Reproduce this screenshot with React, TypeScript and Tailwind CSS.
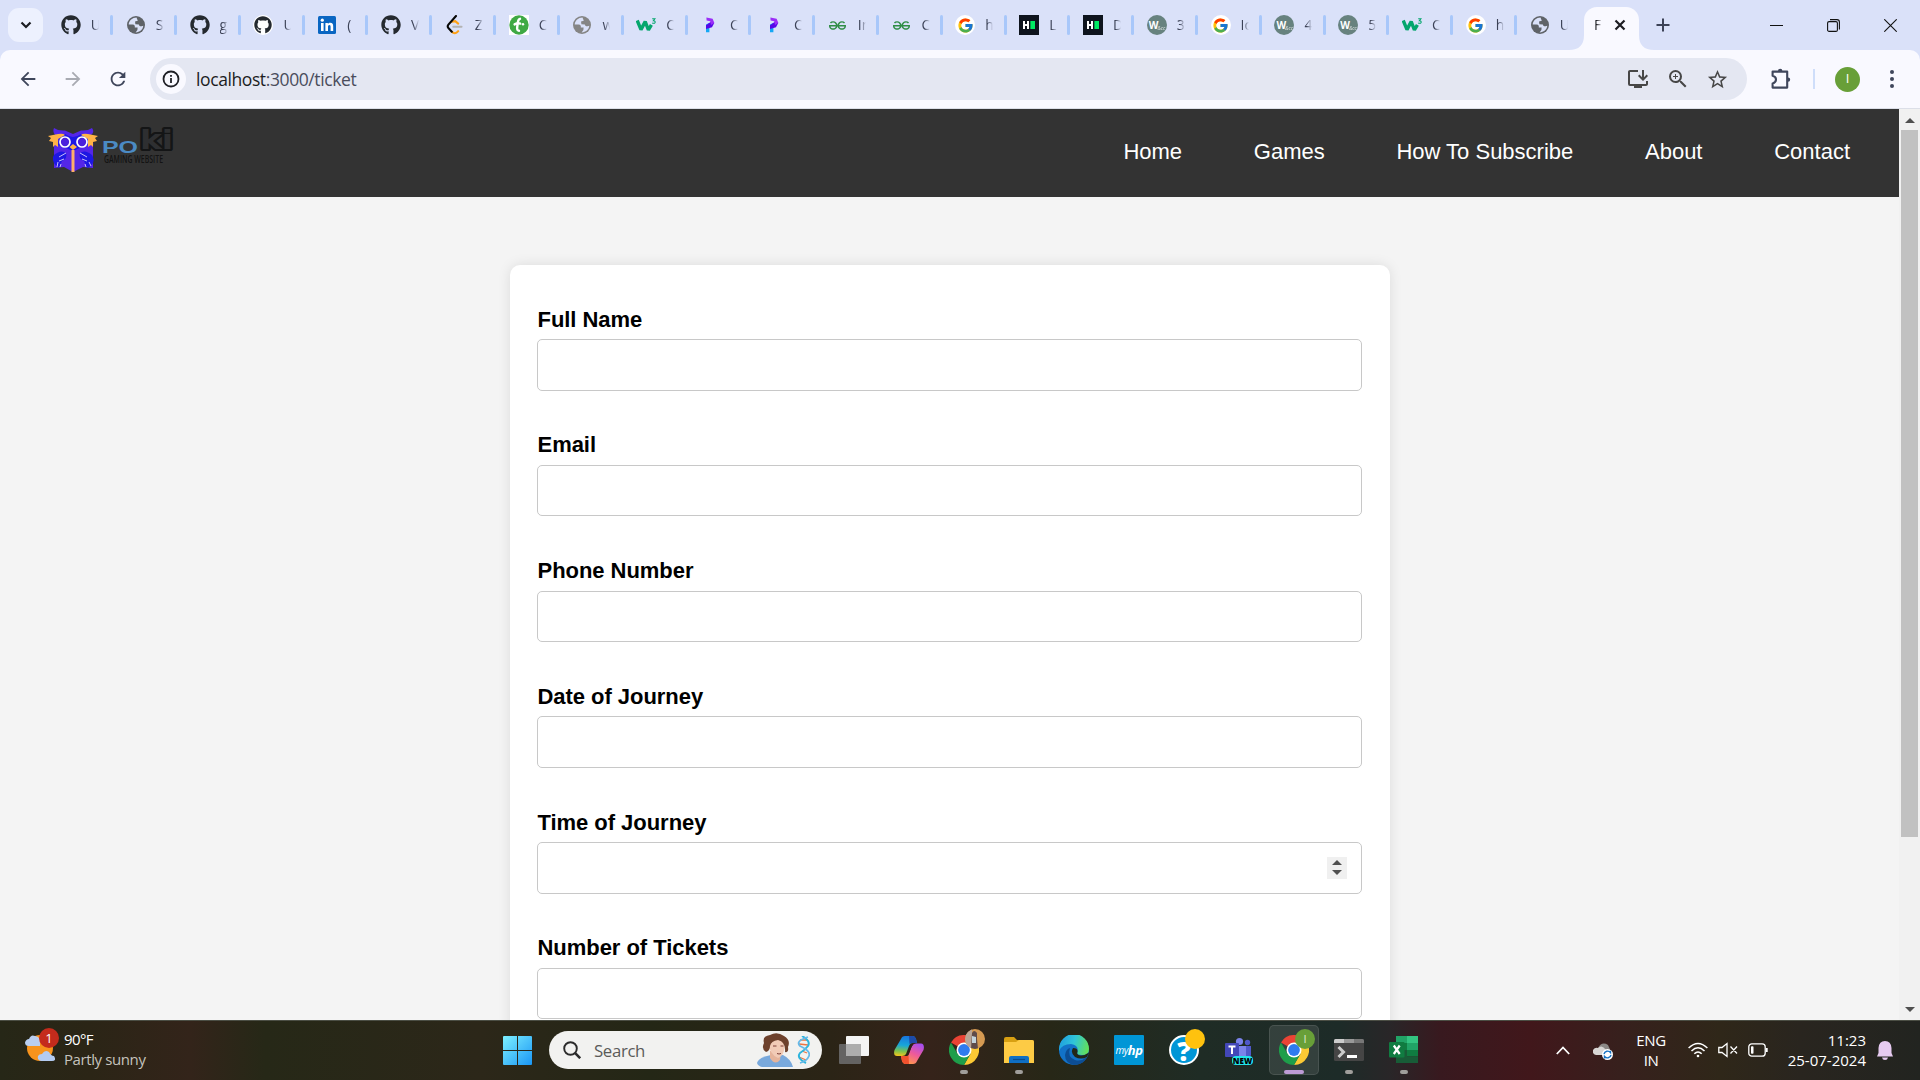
import React from "react";
import { FaGithub } from "react-icons/fa";
import { FcGoogle } from "react-icons/fc";
import { SiGeeksforgeeks } from "react-icons/si";
import { MdInstallDesktop, MdZoomIn, MdStarBorder, MdRefresh, MdArrowBack, MdArrowForward } from "react-icons/md";

const Globe = ({ fill = "#5f6368" }: { fill?: string }) => (
  <svg viewBox="0 0 20 20" className="h-5 w-5">
    <circle cx="10" cy="10" r="9" fill={fill} />
    <path d="M10.5 2.6C6.5 2.6 3 5.6 2.7 9.4L6.6 9.6C8.8 9.8 9 11.2 8.8 12.4L11.6 12.6L11.4 15L9.6 17.4C13.6 17.4 17 14.6 17.3 10.8L15.6 11.2C13.8 11.4 13 10.6 12.9 9.4L9.4 9.2L9 6.4L11.8 5.8Z" fill="#dae1f9" />
  </svg>
);

const GithubLight = () => (
  <span className="flex h-5 w-5 items-center justify-center rounded-full bg-white">
    <FaGithub className="h-[18px] w-[18px] text-[#24292f]" />
  </span>
);

const LinkedIn = () => (
  <svg viewBox="0 0 20 20" className="h-5 w-5">
    <rect x="1" y="1" width="18" height="18" rx="1.5" fill="#0a66c2" />
    <rect x="4" y="8" width="2.6" height="8" fill="#fff" />
    <circle cx="5.3" cy="5.2" r="1.6" fill="#fff" />
    <path d="M8.4 8h2.5v1.1c.5-.8 1.3-1.3 2.4-1.3 2.2 0 2.9 1.4 2.9 3.6V16h-2.6v-4.1c0-1-.2-1.8-1.2-1.8s-1.4.8-1.4 1.8V16H8.4z" fill="#fff" />
  </svg>
);

const LeetCode = () => (
  <svg viewBox="0 0 20 20" className="h-5 w-5" fill="none" strokeLinecap="round" strokeWidth="2.1">
    <path d="M8.3 11.7H16.5" stroke="#b3b3b3" />
    <path d="M7 6.6L10.2 6.2L13.2 8.6M6.6 16.5Q10 20.2 13.2 16.2" stroke="#ffa116" />
    <path d="M11 1L3.4 9.6Q2 11.4 3.4 13L6.8 16.7" stroke="#070706" />
  </svg>
);

const TGreen = () => (
  <svg viewBox="0 0 20 20" className="h-5 w-5">
    <path d="M0 0h20v20H0z" fill="#fff" />
    <circle cx="10" cy="10" r="9.7" fill="#3fa944" />
    <path d="M11 3.8C8.8 4.4 9 6.6 8.7 8.8C8.2 12 7.2 15.5 10 15.8M5.6 9.4Q9 7.4 11.2 8.6" stroke="#fff" strokeWidth="2.4" fill="none" strokeLinecap="round" />
    <circle cx="14" cy="9.3" r="1.2" fill="#fff" />
  </svg>
);

const W3 = () => (
  <svg viewBox="0 0 20 20" className="h-5 w-5" fill="none" stroke="#04a66d">
    <path d="M1.2 5.5L5 14.6L9.2 6.6L12.4 14.8L15.4 9.8" strokeWidth="3.4" strokeLinejoin="bevel" />
    <path d="M16.2 3.7H19L17.4 5.7Q19.3 5.8 19.1 7.4Q18.4 8.8 16.2 7.9" strokeWidth="1.1" />
  </svg>
);

const PIcon = () => (
  <svg viewBox="0 0 20 20" className="h-5 w-5">
    <path d="M6 9.5L9.4 7.8V17.2H6z" fill="#14a8f5" />
    <path d="M6 14L6 10.2L11 6.8L14.2 8L12 12.2Z" fill="#5607e8" />
    <path d="M6.4 2.6L12.6 3.8L14.4 8L11 10L10.2 6.2L6.6 5.6Z" fill="#9a2df7" />
  </svg>
);

const Google = () => (
  <span className="flex h-5 w-5 items-center justify-center rounded-full bg-white">
    <FcGoogle className="h-[17px] w-[17px]" />
  </span>
);

const HackerRank = () => (
  <svg viewBox="0 0 20 20" className="h-5 w-5">
    <path d="M0 0h20v20H0z" fill="#0e141e" />
    <path d="M4 6h2v3h2V6h2v8H8v-3H6v3H4z" fill="#fff" />
    <path d="M11.4 6H16v8h-4.6z" fill="#00ea64" />
  </svg>
);

const WIcon = () => (
  <span className="flex h-5 w-5 items-center overflow-hidden rounded-full bg-[#67827f] pl-[2px] font-['Open_Sans',sans-serif] leading-none text-white">
    <span className="text-[10px] font-bold">W</span>
    <span className="-ml-px mt-1.5 text-[5px] italic opacity-80">&amp;cc</span>
  </span>
);

const Gh = () => <FaGithub className="h-5 w-5 text-[#24292f]" />;
const Gfg = () => <SiGeeksforgeeks className="h-[17px] w-[17px] text-[#2f8d46]" />;

const tabs: [React.ReactNode, string][] = [
  [<Gh />, "U"], [<Globe />, "S"], [<Gh />, "g"], [<GithubLight />, "U"], [<LinkedIn />, "("], [<Gh />, "V"],
  [<LeetCode />, "Z"], [<TGreen />, "C"], [<Globe fill="#858585" />, "w"], [<W3 />, "C"], [<PIcon />, "C"], [<PIcon />, "C"],
  [<Gfg />, "In"], [<Gfg />, "C"], [<Google />, "h"], [<HackerRank />, "L"], [<HackerRank />, "D"], [<WIcon />, "3"],
  [<Google />, "Ic"], [<WIcon />, "4"], [<WIcon />, "5"], [<W3 />, "C"], [<Google />, "h"], [<Globe />, "U"],
];

function TabStrip() {
  return (
    <div className="flex h-[50px] bg-[#dae1f9]">
      <div className="ml-2 mt-2 flex h-[34px] w-[35px] shrink-0 items-center justify-center rounded-[11px] bg-[#edf1fe]">
        <svg viewBox="0 0 12 8" className="h-[8px] w-[12px]" fill="none" stroke="#1c1d22" strokeWidth="2.2"><path d="M1.5 1.5L6 6L10.5 1.5" /></svg>
      </div>
      <div className="ml-[5.2px] flex shrink-0">
        {tabs.map(([icon, text], i) => (
          <div key={i} className={i === 0 ? "flex h-[50px] w-[65px] shrink-0 items-center" : "flex h-[50px] w-[63.82px] shrink-0 items-center"}>
            <span className="ml-[12.6px] flex h-5 w-5 shrink-0 items-center justify-center">{icon}</span>
            <span className="ml-[10px] w-[8px] overflow-hidden whitespace-nowrap text-[14px] leading-5 text-[#3c4257] [mask-image:linear-gradient(to_right,black_30%,transparent)]">{text}</span>
            {i < 23 && <span className="ml-auto h-5 w-[3px] rounded-full bg-[#a8c7fa]" />}
          </div>
        ))}
      </div>
      <div className="-ml-[12px] flex shrink-0 items-end">
        <svg viewBox="0 0 15 15" className="h-[15px] w-[15px]"><path d="M0 15Q15 15 15 0V15z" fill="#f9f9ff" /></svg>
        <div className="flex h-[43px] w-[55px] items-center rounded-t-[13px] bg-[#f9f9ff] pb-[7px] pl-[10px]">
          <span className="w-[8px] overflow-hidden text-[14px] leading-5 text-[#1c1d22] [mask-image:linear-gradient(to_right,black_30%,transparent)]">F</span>
          <svg viewBox="0 0 12 12" className="ml-[12px] h-3 w-3" stroke="#1c1d22" strokeWidth="2.2"><path d="M1.5 1.5L10.5 10.5M10.5 1.5L1.5 10.5" /></svg>
        </div>
        <svg viewBox="0 0 15 15" className="h-[15px] w-[15px]"><path d="M15 15Q0 15 0 0V15z" fill="#f9f9ff" /></svg>
      </div>
      <div className="ml-[2.500px] flex items-center">
        <svg viewBox="0 0 14 14" className="h-[14px] w-[14px]" stroke="#3c4257" strokeWidth="2"><path d="M7 0.5V13.5M0.5 7H13.5" /></svg>
      </div>
      <div className="ml-auto mr-[23px] flex items-center gap-[44px]">
        <svg viewBox="0 0 13 13" className="h-[13px] w-[13px]" stroke="#111" strokeWidth="1"><path d="M0 6.5H13" /></svg>
        <svg viewBox="0 0 13 13" className="h-[13px] w-[13px]" fill="none" stroke="#111" strokeWidth="1.1"><rect x=".6" y="2.6" width="9.8" height="9.8" rx="1.5" /><path d="M3 .6H10Q12.4 .6 12.4 3V10.5" /></svg>
        <svg viewBox="0 0 13 13" className="h-[13px] w-[13px]" stroke="#111" strokeWidth="1.1"><path d="M.3 .3L12.7 12.7M12.7 .3L.3 12.7" /></svg>
      </div>
    </div>
  );
}

function Toolbar() {
  return (
    <div className="h-[59px] bg-[#dae1f9]">
      <div className="flex h-full items-start rounded-t-[10px] border-b border-[#dcdfe8] bg-[#f9f9ff] pt-2">
        <div className="flex h-[42px] w-[150px] items-center gap-[23px] pl-[16.500px]">
          <MdArrowBack className="h-[22px] w-[22px] text-[#3f465b]" />
          <MdArrowForward className="h-[22px] w-[22px] text-[#a8aab2]" />
          <MdRefresh className="h-[22px] w-[22px] text-[#3f465b]" />
        </div>
        <div className="flex h-[42px] w-[1597px] items-center rounded-full bg-[#e4e7f2] pl-[6px] pr-[18px]">
          <span className="flex h-[30px] w-[30px] items-center justify-center rounded-full bg-[#f9f9ff]">
            <svg viewBox="0 0 18 18" className="h-[18px] w-[18px]" fill="none" stroke="#1f2026" strokeWidth="1.8"><circle cx="9" cy="9" r="7.5" /><path d="M9 8V13M9 5V6.8" /></svg>
          </span>
          <span className="ml-[10px] pt-px text-[17.500px] tracking-[-0.4px] text-[#4a4d5c]"><span className="text-[#1c1d22]">localhost</span>:3000/ticket</span>
          <div className="ml-auto flex items-center gap-[16px] text-[#474747]">
            <MdInstallDesktop className="h-6 w-6" />
            <MdZoomIn className="h-6 w-6" />
            <MdStarBorder className="h-[23px] w-[23px]" />
          </div>
        </div>
        <div className="flex h-[42px] items-center pl-[22px]">
          <svg viewBox="0 0 24 24" className="h-6 w-6" fill="none" stroke="#3f465b" strokeWidth="2.1" strokeLinejoin="round">
            <path d="M3.6 4.6H18.2V20.6H3.6V16.4Q7 15.6 7 12.6T3.6 8.8Z" />
            <path d="M9 4a2.2 2.2 0 0 1 4.4 0zM19 10.4a2.2 2.2 0 0 1 0 4.4z" fill="#3f465b" stroke="none" />
          </svg>
          <span className="ml-[20px] h-5 w-[2px] bg-[#cfdefa]" />
          <span className="ml-[20px] flex h-[25px] w-[25px] items-center justify-center rounded-full bg-[#689f38] text-[13px] text-white">I</span>
          <span className="ml-[30px] flex flex-col gap-[3px]">
            <i className="h-1 w-1 rounded-full bg-[#3f465b]" /><i className="h-1 w-1 rounded-full bg-[#3f465b]" /><i className="h-1 w-1 rounded-full bg-[#3f465b]" />
          </span>
        </div>
      </div>
    </div>
  );
}

const Logo = () => (
  <svg viewBox="0 0 128 48" className="h-[48px] w-[128px]">
    <path d="M6 3Q10 6 17 5.500L25 9L33 5.500Q40 6 44 3Q47 7 43 10Q46 16 45 22V43L35 42L25 47L16 42L6 43V22Q5 15 8 11Q4 7 6 3Z" fill="#5426e8" />
    <path d="M17 9Q25 15 33 9Q41 13 41 19L25 26L10 20Q10 12 17 9Z" fill="#1d17e3" />
    <path d="M0 11L10 9Q15 8 17 10L10 14V22L7 20L5 22L5 17L1 16L3 13Z M50 11L40 9Q35 8 33 10L40 14V22L43 20L45 22L45 17L49 16L47 13Z" fill="#ffb347" />
    <circle cx="17" cy="17" r="5" fill="#4a20dc" stroke="#fff" strokeWidth="1.7" />
    <circle cx="34" cy="17" r="5" fill="#4a20dc" stroke="#fff" strokeWidth="1.7" />
    <path d="M25 19L29 22L25 25L21.500 22Z" fill="#ffb347" />
    <path d="M6 30Q13 24 18 28Q20 33 14 36L11 43Q4 39 5 32ZM44 30Q37 24 32 28Q30 33 36 36L39 43Q48 39 45 32Z" fill="#1d17e3" />
    <path d="M11 32L18 28M11 36L16 34M9 42L10 37M12 42L13 39M39 32L32 28M39 36L34 34M43 41L41 37M38 42L37 39" stroke="#c9bdf8" strokeWidth="1" fill="none" />
    <path d="M25 25V47" stroke="#ffae6b" strokeWidth="3" />
    <text x="54" y="27.500" fontFamily="Liberation Sans" fontWeight="bold" fontSize="17" textLength="36" lengthAdjust="spacingAndGlyphs" fill="#4b8bc4">PO</text>
    <text x="92" y="24" fontFamily="DejaVu Sans" fontWeight="bold" fontSize="26" textLength="33" lengthAdjust="spacingAndGlyphs" fill="#2e2f31" stroke="#141516" strokeWidth="4" strokeLinejoin="round" paintOrder="stroke">ki</text>
    <text x="56" y="37.500" fontFamily="Open Sans" fontSize="10.500" fontWeight="600" textLength="59" lengthAdjust="spacingAndGlyphs" fill="#141414">GAMING WEBSITE</text>
  </svg>
);

const fields = ["Full Name", "Email", "Phone Number", "Date of Journey", "Time of Journey", "Number of Tickets"];

function Page() {
  return (
    <div className="flex h-[911px] overflow-hidden bg-[#f4f4f4] font-['Liberation_Sans',sans-serif]">
      <div className="w-[1899px] shrink-0">
        <header className="flex h-[88px] items-start justify-between bg-[#333] pl-12 pr-[49px]">
          <div className="mt-4"><Logo /></div>
          <nav className="mt-[29px] flex gap-[71.700px] text-[22px] leading-7 text-white">
            {["Home", "Games", "How To Subscribe", "About", "Contact"].map((t) => <a key={t}>{t}</a>)}
          </nav>
        </header>
        <main className="mx-auto mt-[68px] h-[900px] w-[880px] rounded-[10px] bg-white pl-[27px] pr-[28px] pt-[40px] shadow-[0_0_13px_rgba(0,0,0,0.1)]">
          {fields.map((f) => (
            <div key={f} className="h-[125.750px]">
              <label className="block h-[34px] pl-px pt-[0.500px] text-[22px] font-bold leading-[28px] tracking-[-0.040px] text-black">{f}</label>
              <div className="flex h-[51.500px] w-full items-center justify-end rounded-[5px] border border-[#c8c8c8] bg-white pr-[14px]">
                {f === "Time of Journey" && (
                  <span className="flex h-[22px] w-5 flex-col items-center justify-center gap-[5px] bg-[#f0f0f0]">
                    <svg viewBox="0 0 10 5" className="h-[5px] w-[10px]"><path d="M0 5L5 0L10 5z" fill="#505050" /></svg>
                    <svg viewBox="0 0 10 5" className="h-[5px] w-[10px]"><path d="M0 0L5 5L10 0z" fill="#505050" /></svg>
                  </span>
                )}
              </div>
            </div>
          ))}
        </main>
      </div>
      <div className="flex w-[21px] flex-col items-center bg-[#f1f1f1]">
        <svg viewBox="0 0 10 5" className="mt-[9px] h-[5px] w-[10px]"><path d="M0 5L5 0L10 5z" fill="#505050" /></svg>
        <div className="mt-[7px] h-[707px] w-[17px] bg-[#c1c1c1]" />
        <svg viewBox="0 0 10 5" className="mb-[8px] mt-auto h-[5px] w-[10px]"><path d="M0 0L5 5L10 0z" fill="#505050" /></svg>
      </div>
    </div>
  );
}

const Chrome = () => (
  <svg viewBox="0 0 30 30" className="h-[30px] w-[30px]">
    <path d="M15 15L2 7.500A15 15 0 0 1 28 7.500H15z" fill="#ea4335" />
    <path d="M15 15L28 7.500A15 15 0 0 1 15 30L21.500 18.700z" fill="#fcc934" />
    <path d="M2 7.500A15 15 0 0 0 15 30L21.500 18.700L15 22L8.500 18.700z" fill="#1e9e4a" />
    <path d="M15 7.500H28A15 15 0 0 1 29.900 13L15 15z" fill="#fcc934" />
    <circle cx="15" cy="15" r="7.500" fill="#fff" /><circle cx="15" cy="15" r="5.900" fill="#2f7bee" />
  </svg>
);

const Copilot = () => (
  <svg viewBox="0 0 30 28" className="h-[28px] w-[30px]">
    <defs>
      <linearGradient id="cpA" x1=".3" y1="0" x2=".2" y2="1"><stop offset="0" stopColor="#1877e0" /><stop offset=".45" stopColor="#18a6d8" /><stop offset=".75" stopColor="#7cc24c" /><stop offset="1" stopColor="#f5c51c" /></linearGradient>
      <linearGradient id="cpB" x1=".8" y1="0" x2=".3" y2="1"><stop offset="0" stopColor="#a44df0" /><stop offset=".5" stopColor="#ee5a9a" /><stop offset="1" stopColor="#ff9a4a" /></linearGradient>
    </defs>
    <path d="M7 3Q8 0 11 0H19Q21 0 22 3L23 7H18Q16 7 15 10L12 18Q11 20 8 20H3Q-1 20 .5 14Z" fill="url(#cpA)" />
    <path d="M15 0H19Q21 0 22 3L23 7H19Q16 7 15.500 8Z" fill="#1d4ba8" />
    <path d="M23 25Q22 28 19 28H11Q9 28 8 25L7 20H12Q14 20 15 17L18 10Q19 7.500 22 7.500H27Q31 8 29.500 14Z" fill="url(#cpB)" />
    <path d="M15 28H11Q9 28 8 25L7 20H11Q14 20 14.500 19Z" fill="#f0512e" />
    <path d="M17 8.500H19.500Q18 9.500 17.500 11L14.800 18.500Q14.200 19.800 13 20H11Q12.500 19 13 17.500L15.500 10.500Q16 9 17 8.500Z" fill="#2a2118" />
  </svg>
);

const Folder = () => (
  <svg viewBox="0 0 30 28" className="h-[28px] w-[30px]">
    <path d="M0 3Q0 1 2 1H10L13 4H28Q30 4 30 6V14H0z" fill="#d8a012" />
    <path d="M0 6H12L15 4H28Q30 4 30 6V27H0z" fill="#fdcb45" />
    <path d="M5 27V22Q5 20 7 20H23Q25 20 25 22V27z" fill="#0f6fc4" /><path d="M9 23.500H21" stroke="#0a4a8c" strokeWidth="1.200" />
  </svg>
);

const Edge = () => (
  <svg viewBox="0 0 30 30" className="h-[30px] w-[30px]">
    <defs>
      <linearGradient id="edA" x1="0" y1=".3" x2="1" y2=".5"><stop offset="0" stopColor="#1f9ee0" /><stop offset=".5" stopColor="#30c5d8" /><stop offset="1" stopColor="#62e05a" /></linearGradient>
    </defs>
    <circle cx="15" cy="15" r="15" fill="#1272c8" />
    <path d="M0 14A15 15 0 0 1 30 14Q30 20 23 20Q17 20 18.500 17Q20 10 12 9Q3 9 0 16z" fill="url(#edA)" />
    <path d="M11 13Q8 22 16 25Q22 27 28 22Q24 30 15 30Q6 28 6 20Q7 14 11 13z" fill="#0c4d94" />
    <path d="M14 13Q19 13 18.500 17Q17 20 22 20.500Q26 20.500 30.500 17L28 22Q22 25 16 22Q11 18 14 13z" fill="#222719" />
  </svg>
);

const Teams = () => (
  <span className="relative block h-[30px] w-[30px]">
    <svg viewBox="0 0 30 30" className="h-[30px] w-[30px]">
      <circle cx="15.500" cy="6.500" r="3.600" fill="#7b83eb" /><circle cx="23.500" cy="7.500" r="2.700" fill="#5059c9" />
      <path d="M20 11H27V20Q26 24 20 23z" fill="#5059c9" /><path d="M12 11H22V22Q18 28 12 24z" fill="#7b83eb" />
      <rect x="1" y="8" width="14" height="14" rx="1" fill="#4347b8" />
      <path d="M4.500 11.500H11.500M8 11.500V19" stroke="#fff" strokeWidth="2" />
    </svg>
    <span className="absolute left-[8px] top-[21px] flex h-[9px] w-[21px] items-center justify-center rounded-sm bg-[#22e4ea] text-[8px] font-extrabold leading-none text-black">NEW</span>
  </span>
);

const Badge = ({ children }: { children: React.ReactNode }) => (
  <span className="absolute -top-[6px] left-[16px] block h-5 w-5 overflow-hidden rounded-full">{children}</span>
);

const apps: [React.ReactNode, string][] = [
  [<svg viewBox="0 0 30 28" className="h-[28px] w-[30px]"><rect x="7" y="0" width="23" height="20" rx="1" fill="#f4f4f4" /><rect x="0" y="8" width="22" height="20" rx="1" fill="#6a6a6a" fillOpacity=".9" /><path d="M7 8H22V20H7z" fill="#adadad" /></svg>, ""],
  [<Copilot />, ""],
  [<span className="relative"><Chrome /><Badge><svg viewBox="0 0 20 20"><path d="M0 0h20v20H0z" fill="#d59a52" /><path d="M0 0h7v20H0z" fill="#b9a596" /><path d="M7 4Q9 0 12 4V10L13 20H6z" fill="#5f4b4a" /><path d="M7 7L11 8V14H7z" fill="#c3d3dc" /></svg></Badge></span>, "dot"],
  [<Folder />, "dot"],
  [<Edge />, ""],
  [<span className="flex h-[30px] w-[30px] items-center justify-center rounded-[1px] bg-[#0096d6] text-[10px] italic leading-none tracking-tighter text-white">my<b className="text-[13px]">hp</b></span>, ""],
  [<span className="relative"><span className="flex h-[30px] w-[30px] items-center justify-center rounded-full border-2 border-white bg-[#0096d6] text-[27px] font-extrabold leading-none text-white">?</span><Badge><i className="block h-5 w-5 bg-[#ffc20e]" /></Badge></span>, ""],
  [<Teams />, ""],
  [<span className="relative"><Chrome /><Badge><i className="flex h-5 w-5 items-center justify-center bg-[#689f38] text-[11px] not-italic text-[#dfeacb]">I</i></Badge></span>, "active"],
  [<svg viewBox="0 0 30 22" className="h-[22px] w-[30px]"><rect width="30" height="22" rx="1.500" fill="#454545" /><path d="M0 1.500Q0 0 1.500 0H10V4H0z" fill="#ccc" /><path d="M10 0H20V4H10z" fill="#999" /><path d="M20 0H28.500Q30 0 30 1.500V4H20z" fill="#777" /><path d="M4.500 8L9.500 13L4.500 18" stroke="#ccc" strokeWidth="3" fill="none" /><path d="M13 17.500H23" stroke="#fff" strokeWidth="3" /></svg>, "dot"],
  [<svg viewBox="0 0 30 28" className="h-[28px] w-[30px]"><path d="M7 0H18V7H7z" fill="#21a366" /><path d="M18 0H29V7H18z" fill="#33c481" /><path d="M7 7H18V14H7z" fill="#107c41" /><path d="M18 7H29V14H18z" fill="#21a366" /><path d="M7 14H18V27H7z" fill="#185c37" /><path d="M18 14H29V20.500H18z" fill="#107c41" /><path d="M18 20.500H29V27H18z" fill="#185c37" /><rect x="0" y="6" width="15.500" height="15.500" rx="1" fill="#107c41" /><path d="M4.800 9.500L10.700 18M10.700 9.500L4.800 18" stroke="#fff" strokeWidth="2.200" /></svg>, "dot"],
];

function Taskbar() {
  return (
    <div className="flex h-[60px] items-start border-t border-[#4b4e44] bg-[linear-gradient(to_right,#262717_0px,#2b2516_90px,#33241a_190px,#262817_265px,#2c2719_480px,#242716_650px,#2b2416_830px,#35231a_930px,#272717_1050px,#1f2c25_1200px,#1d2b28_1340px,#292628_1390px,#38191f_1440px,#41171b_1530px,#37201d_1620px,#2f2719_1720px,#29251f_1800px,#222420_1920px)]">
      <div className="flex h-full w-[492px] pl-[25px] text-[15px] leading-5">
        <div className="relative mt-[12px] h-[30px] w-[39px]">
          <svg viewBox="0 0 30 30" className="h-[30px] w-[30px]">
            <circle cx="15" cy="15" r="13" fill="#f7931c" />
            <path d="M4 13Q0 13 0 9.500Q1 6 4 6Q6 1 10 3Q16 4 15 10V13z" fill="#b9cef0" />
            <path d="M16 28Q12 27 13 23Q14 21 17 21Q20 16 24 19Q26 23 29 23Q32 28 27 28z" fill="#b3cbf1" />
          </svg>
          <span className="absolute -top-[5px] left-[14px] flex h-5 w-5 items-center justify-center rounded-full bg-[#c42b1c] text-[13px] text-white">1</span>
        </div>
        <div className="mt-[8px]">
          <div className="tracking-[-0.600px] text-white">90°F</div>
          <div className="tracking-[-0.400px] text-[#c5c3bd]">Partly sunny</div>
        </div>
      </div>
      <div className="flex h-full items-start">
        <div className="flex h-[60px] w-[50px] items-center justify-center pb-[1px]">
          <svg viewBox="0 0 29 29" className="h-[29px] w-[29px]"><defs><linearGradient id="win" x1="0" y1="0" x2="1" y2="1"><stop offset="0" stopColor="#7df0ff" /><stop offset="1" stopColor="#1a96f5" /></linearGradient></defs><path d="M0 1Q0 0 1 0H14V14H0zM15 0H28Q29 0 29 1V14H15zM0 15H14V29H1Q0 29 0 28zM15 15H29V28Q29 29 28 29H15z" fill="url(#win)" /></svg>
        </div>
        <div className="ml-[7px] mt-[10px] flex h-[38px] w-[273px] items-center rounded-full bg-[#f2f2f0] pl-[14px]">
          <svg viewBox="0 0 18 18" className="h-[18px] w-[18px]" fill="none" stroke="#2b2b2b"><circle cx="7.500" cy="7.500" r="6.300" strokeWidth="1.900" /><path d="M12.200 12.200L17.200 17.200" strokeWidth="2.600" /></svg>
          <span className="ml-[13px] w-[163px] pt-px text-[16.800px] tracking-[-0.350px] text-[#5b5b59]">Search</span>
          <svg viewBox="0 0 36 34" className="h-[34px] w-[36px]">
            <path d="M0 30Q2 24 14 22L26 22Q34 26 36 34H5Q1 33 0 30z" fill="#79a9dc" />
            <path d="M13 18H24L23 27Q18 33 13 25z" fill="#e5b49b" />
            <path d="M10 8Q16 1 27 8Q29 22 21 25Q13 22 10 8z" fill="#f1cbb6" />
            <path d="M9 19Q4 16 7 10Q5 3 13 2Q20 -2 27 3Q34 7 31 14Q32 20 28 19Q29 9 21 7Q14 8 13 13Q13 18 9 19z" fill="#6d412c" />
            <path d="M16 13H19.500M23.500 13H26.500M20 20.500Q22 21.500 24 20.500" stroke="#7d3f36" strokeWidth="1" fill="none" />
          </svg>
          <svg viewBox="0 0 13 28" className="ml-[4px] h-[28px] w-[13px]" fill="none"><path d="M3 4H11M2 8L11 9M5 15L10 17M2 21L9 24" stroke="#ec7440" strokeWidth="1.300" /><path d="M5 0Q14 5 11 10Q8 14 3 17Q-1 22 9 27" stroke="#2db5dd" strokeWidth="2" /><path d="M11 1Q-2 5 3 10Q14 15 12 20Q10 25 3 27" stroke="#65b9e8" strokeWidth="1.800" /></svg>
        </div>
        <div className="ml-[7px] mt-[4px] flex gap-[5px]">
          {apps.map(([icon, state], i) => (
            <div key={i} className={state === "active" ? "flex h-[50px] w-[50px] flex-col items-center justify-between rounded-[5px] border border-white/10 bg-white/10" : "flex h-[50px] w-[50px] flex-col items-center justify-between border border-transparent"}>
              <div className="mt-[9px] flex h-[30px] items-center">{icon}</div>
              {state === "dot" && <i className="h-1 w-2 rounded-full bg-[#a09e9b]" />}
              {state === "active" && <i className="h-1 w-5 rounded-full bg-[#bd9bd6]" />}
            </div>
          ))}
        </div>
      </div>
      <div className="flex h-[58px] flex-1 items-center pl-[127px] text-[15px] leading-5 text-white">
        <svg viewBox="0 0 14 9" className="h-[9px] w-[14px]" fill="none" stroke="#fff" strokeWidth="1.800"><path d="M.8 8L7 1.500L13.200 8" /></svg>
        <svg viewBox="0 0 20 18" className="ml-[23px] mt-[2px] h-[18px] w-[20px]"><path d="M5 6Q9 -1 15 3Q18 8 17 12H5z" fill="#8b8886" /><path d="M3 13Q-1 12 0 8Q2 5 5 6Q9 2 13 8V13z" fill="#d8d6d4" /><circle cx="14.500" cy="12.500" r="5.500" fill="#fff" /><path d="M11 12A3.700 3.700 0 0 1 17.500 10.500V8.800M18 13A3.700 3.700 0 0 1 11.500 14.500V16.400" fill="none" stroke="#1673c4" strokeWidth="1.400" /></svg>
        <div className="ml-[22px] w-[32px] text-center tracking-[-0.400px]">ENG<br />IN</div>
        <svg viewBox="0 0 20 16" className="ml-[21px] h-[16px] w-[20px]" fill="none" stroke="#fff" strokeWidth="1.500"><path d="M.6 6Q10 -3 19.400 6M3.500 9Q10 2.600 16.500 9M6.300 11.800Q10 8 13.700 11.800" /><circle cx="10" cy="14" r="1.300" fill="#fff" stroke="none" /></svg>
        <svg viewBox="0 0 20 16" className="ml-[10px] h-[16px] w-[20px]" fill="none" stroke="#fff" strokeWidth="1.300"><path d="M.8 5.500H4L9 1.500V14.500L4 10.500H.8zM12.500 4.500L19 11.500M19 4.500L12.500 11.500" /></svg>
        <svg viewBox="0 0 20 14" className="ml-[10px] h-[14px] w-[20px]" fill="none" stroke="#fff" strokeWidth="1.300"><rect x=".8" y=".8" width="16.400" height="12.400" rx="3" /><rect x="3" y="3.200" width="2.500" height="7.600" rx=".8" fill="#fff" stroke="none" /><path d="M18.700 5V9" strokeWidth="2" /></svg>
        <div className="ml-[16px] flex w-[82px] flex-col items-end whitespace-nowrap pb-px"><span>11:23</span><span>25-07-2024</span></div>
        <svg viewBox="0 0 16 19" className="ml-[11px] h-[19px] w-[16px]" fill="#e6caf0"><path d="M0 15.500L1.500 12V7Q2 0 8 0T14.500 7V12L16 15.500zM5 16.500H11Q10.500 19 8 19T5 16.500z" /></svg>
      </div>
    </div>
  );
}

export default function App() {
  return (
    <div className="h-[1080px] w-[1920px] overflow-hidden font-['Open_Sans','Noto_Sans',sans-serif]">
      <TabStrip />
      <Toolbar />
      <Page />
      <Taskbar />
    </div>
  );
}
